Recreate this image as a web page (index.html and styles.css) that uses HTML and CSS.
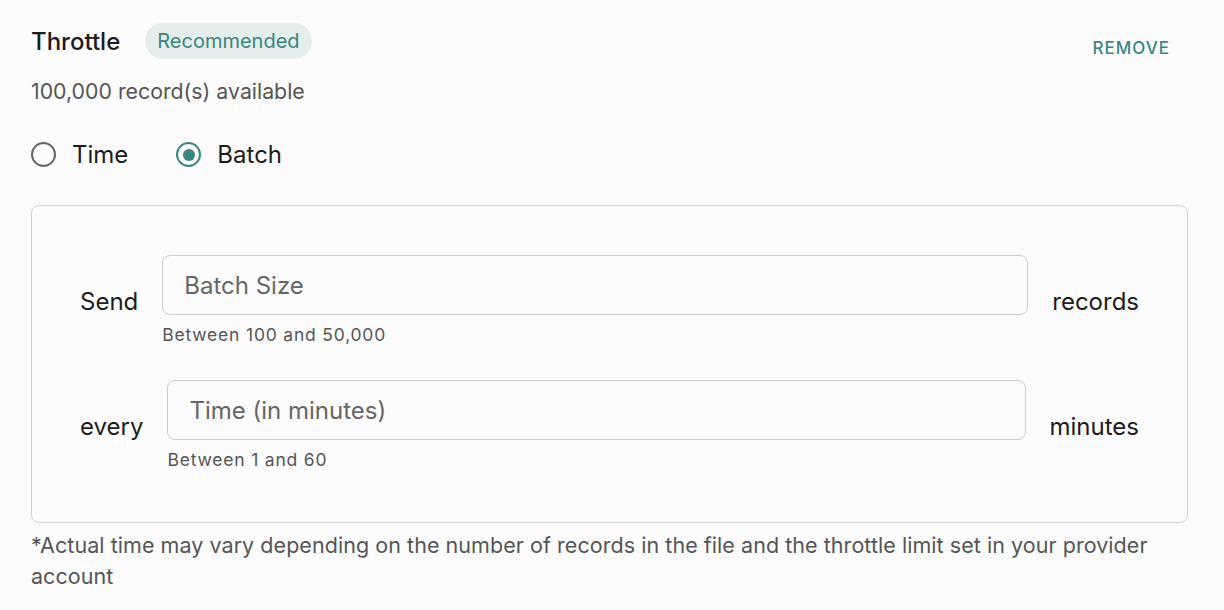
FILE: index.html
```html
<!DOCTYPE html>
<html lang="en">
<head>
  <meta charset="UTF-8">
  <title>Throttle</title>
  <link rel="stylesheet" href="styles.css">
</head>
<body>
  <div class="panel">
    <div class="head">
      <div class="title-row">
        <span class="title">Throttle</span>
        <span class="badge">Recommended</span>
      </div>
      <button class="remove">REMOVE</button>
    </div>
    <div class="available">100,000 record(s) available</div>

    <div class="radios">
      <label class="radio"><span class="dot"></span>Time</label>
      <label class="radio checked"><span class="dot"></span>Batch</label>
    </div>

    <div class="box">
      <div class="row">
        <span class="word">Send</span>
        <div class="field">
          <input type="text" placeholder="Batch Size">
          <div class="hint">Between 100 and 50,000</div>
        </div>
        <span class="word">records</span>
      </div>
      <div class="row">
        <span class="word">every</span>
        <div class="field">
          <input type="text" placeholder="Time (in minutes)">
          <div class="hint">Between 1 and 60</div>
        </div>
        <span class="word">minutes</span>
      </div>
    </div>

    <p class="note">*Actual time may vary depending on the number of records in the file and the throttle limit set in your provider account</p>
  </div>
</body>
</html>
```
FILE: styles.css
```css
body {
  margin: 0;
  background-color: #fcfcfc;
  font-family: 'Inter', 'Noto Sans', sans-serif;
  color: #1c1c1c;
}

.panel {
  padding: 23px 36px 0 31px;
}

.head {
  display: flex;
  justify-content: space-between;
  align-items: flex-start;
}

.title-row {
  display: flex;
  align-items: center;
  gap: 25px;
}

.title {
  font-size: 24px;
  font-weight: 500;
}

.badge {
  background-color: #e4eeec;
  color: #3a8580;
  font-size: 20px;
  padding: 0 12px;
  height: 36px;
  line-height: 36px;
  border-radius: 18px;
}

.remove {
  margin-top: 15px;
  margin-right: 18px;
  background: none;
  border: none;
  padding: 0;
  color: #3a8580;
  font-family: 'Inter', sans-serif;
  font-size: 17px;
  font-weight: 500;
  letter-spacing: 1px;
  cursor: pointer;
}

.available {
  margin-top: 19px;
  font-size: 21.3px;
  color: #555;
}

.radios {
  display: flex;
  gap: 48px;
  margin-top: 36px;
}

.radio {
  display: flex;
  align-items: center;
  gap: 16px;
  font-size: 24px;
}

.dot {
  width: 21px;
  height: 21px;
  border: 2px solid #666;
  border-radius: 50%;
  box-sizing: content-box;
  position: relative;
}

.checked .dot {
  border-color: #3a8580;
}

.checked .dot::after {
  content: "";
  position: absolute;
  left: 4.5px;
  top: 4.5px;
  width: 12px;
  height: 12px;
  border-radius: 50%;
  background-color: #3a8580;
}

.box {
  margin-top: 36px;
  border: 1px solid #cfcfcf;
  border-radius: 8px;
  padding: 49px 48px 52px 48px;
  display: flex;
  flex-direction: column;
  gap: 35px;
}

.row {
  display: flex;
  align-items: center;
  gap: 24px;
}

.word {
  font-size: 24px;
  padding-top: 2px;
}

.field {
  flex: 1;
}

.field input {
  width: 100%;
  box-sizing: border-box;
  height: 60px;
  border: 1px solid #cccccc;
  border-radius: 8px;
  background-color: #fcfcfc;
  padding: 0 21px;
  font-family: 'Inter', sans-serif;
  font-size: 24px;
  color: #1c1c1c;
}

.field input::placeholder {
  color: #666;
}

.hint {
  margin-top: 9px;
  font-size: 17.5px;
  letter-spacing: 0.8px;
  color: #555;
}

.note {
  margin: 7px 0 0 0;
  font-size: 21.5px;
  letter-spacing: 0.05px;
  line-height: 31px;
  color: #555;
}
```
